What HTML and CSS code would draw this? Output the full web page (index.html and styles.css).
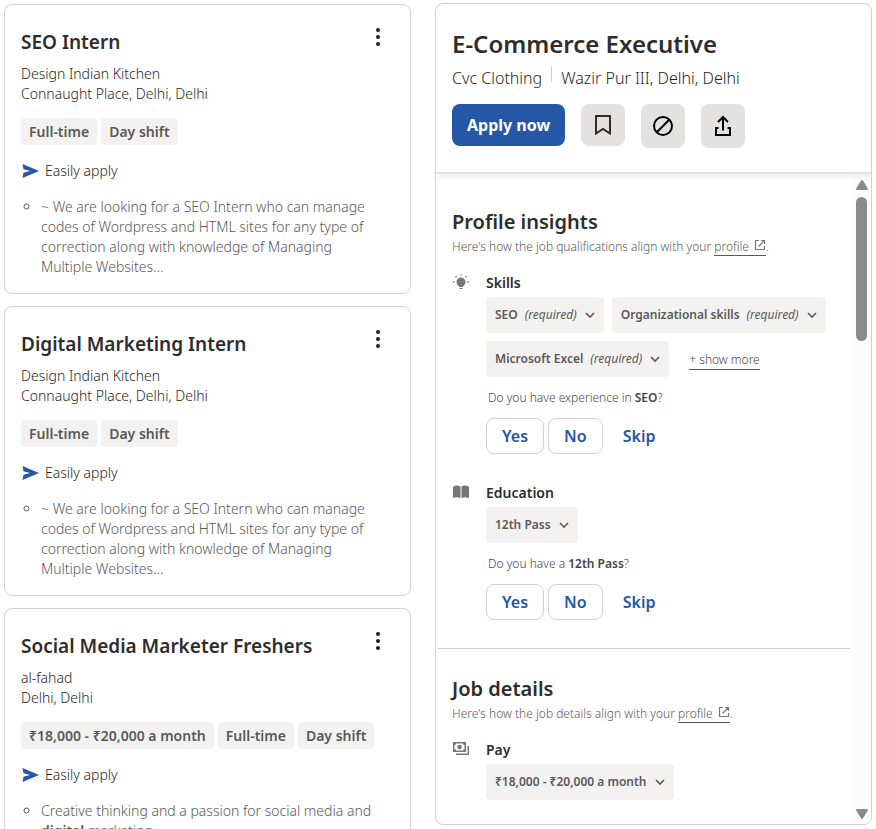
FILE: index.html
```html
<!DOCTYPE html>
<html lang="en">
<head>
<meta charset="utf-8">
<title>Job search</title>
<link rel="stylesheet" href="styles.css">
</head>
<body>
<svg class="sprite" aria-hidden="true">
  <symbol id="dots" viewBox="0 0 20 20"><circle cx="10" cy="3" r="2"/><circle cx="10" cy="10" r="2"/><circle cx="10" cy="17" r="2"/></symbol>
  <symbol id="send" viewBox="0 0 18 16"><path d="M1.500 1L18 8 1.500 15 2.500 9.800 9 8 2.500 6.200z"/></symbol>
  <symbol id="chevron" viewBox="0 0 10 10"><path d="M1 3l4 4 4-4" fill="none" stroke="currentColor" stroke-width="1.600"/></symbol>
  <symbol id="external" viewBox="0 0 12 12"><path d="M5 1.500H1.500v9h9V7M7 1.500h3.500V5M10.500 1.500L4.500 7.500" fill="none" stroke="currentColor" stroke-width="1.200"/></symbol>
</svg>
<main class="page">
  <section class="results" aria-label="Jobs">
    <article class="card">
      <div class="card-head"><h2>SEO Intern</h2><button class="more" aria-label="Job actions"><svg><use href="#dots"/></svg></button></div>
      <p class="company">Design Indian Kitchen<br>Connaught Place, Delhi, Delhi</p>
      <div class="tags"><span>Full-time</span><span>Day shift</span></div>
      <p class="easy"><svg><use href="#send"/></svg>Easily apply</p>
      <ul><li>~ We are looking for a SEO Intern who can manage codes of Wordpress and HTML sites for any type of correction along with knowledge of Managing Multiple Websites…</li></ul>
    </article>
    <article class="card">
      <div class="card-head"><h2>Digital Marketing Intern</h2><button class="more" aria-label="Job actions"><svg><use href="#dots"/></svg></button></div>
      <p class="company">Design Indian Kitchen<br>Connaught Place, Delhi, Delhi</p>
      <div class="tags"><span>Full-time</span><span>Day shift</span></div>
      <p class="easy"><svg><use href="#send"/></svg>Easily apply</p>
      <ul><li>~ We are looking for a SEO Intern who can manage codes of Wordpress and HTML sites for any type of correction along with knowledge of Managing Multiple Websites…</li></ul>
    </article>
    <article class="card">
      <div class="card-head"><h2>Social Media Marketer Freshers</h2><button class="more" aria-label="Job actions"><svg><use href="#dots"/></svg></button></div>
      <p class="company">al-fahad<br>Delhi, Delhi</p>
      <div class="tags"><span>₹18,000 - ₹20,000 a month</span><span>Full-time</span><span>Day shift</span></div>
      <p class="easy"><svg><use href="#send"/></svg>Easily apply</p>
      <ul><li>Creative thinking and a passion for social media and <b>digital</b> marketing.</li></ul>
    </article>
  </section>
  <section class="detail" aria-label="Job">
    <header class="detail-head">
      <h1>E-Commerce Executive</h1>
      <p class="where"><span>Cvc Clothing</span><span class="divider"></span><span>Wazir Pur III, Delhi, Delhi</span></p>
      <div class="actions">
        <button class="apply">Apply now</button>
        <button class="icon-btn save" aria-label="Save job"><svg viewBox="0 0 20 22"><path d="M3 2h14v17.500l-7-4.500-7 4.500z" fill="none" stroke="#2d2d2d" stroke-width="2"/></svg></button>
        <button class="icon-btn" aria-label="Not interested"><svg viewBox="0 0 20 22"><circle cx="10" cy="11" r="9" fill="none" stroke="#000" stroke-width="2"/><path d="M3.800 17.200L16.200 4.800" stroke="#000" stroke-width="2"/></svg></button>
        <button class="icon-btn" aria-label="Share"><svg viewBox="0 0 20 22"><path d="M5.500 13H3v7h14v-7h-2.500M10 15.500V3M5 7l5-5 5 5" fill="none" stroke="#000" stroke-width="2"/></svg></button>
      </div>
    </header>
    <div class="detail-body">
      <div class="content">
        <section class="block">
          <h2>Profile insights</h2>
          <p class="hint">Here's how the job qualifications align with your <a href="#">profile <svg><use href="#external"/></svg></a>.</p>
          <div class="item">
            <svg class="item-icon" viewBox="0 0 16 16"><circle cx="8" cy="8" r="4.500"/><path d="M6 11h4v2H6zM6.500 14h3v1h-3zM7.500 0h1v1.500h-1zM0 7.200h1.700v1.200H0zM14.300 7.200H16v1.200h-1.700zM2 2.800l1-1 1 1-1 1zM12 2.800l1-1 1 1-1 1z"/></svg>
            <div>
              <h3>Skills</h3>
              <div class="chips">
                <button class="chip">SEO <i>(required)</i><svg><use href="#chevron"/></svg></button>
                <button class="chip">Organizational skills <i>(required)</i><svg><use href="#chevron"/></svg></button>
                <button class="chip">Microsoft Excel <i>(required)</i><svg><use href="#chevron"/></svg></button>
                <a class="show-more" href="#">+ show more</a>
              </div>
              <p class="question">Do you have experience in <b>SEO</b>?</p>
              <div class="answers"><button>Yes</button><button>No</button><button class="skip">Skip</button></div>
            </div>
          </div>
          <div class="item">
            <svg class="item-icon" viewBox="0 0 16 16"><path d="M0 3q3.500-2.500 7.500-.5V14q-3.500-1.500-7.500 0zM8.500 2.500Q12.500.5 16 3v11q-4-1.500-7.500 0z"/></svg>
            <div>
              <h3>Education</h3>
              <div class="chips"><button class="chip">12th Pass<svg><use href="#chevron"/></svg></button></div>
              <p class="question">Do you have a <b>12th Pass</b>?</p>
              <div class="answers"><button>Yes</button><button>No</button><button class="skip">Skip</button></div>
            </div>
          </div>
        </section>
        <section class="block">
          <h2>Job details</h2>
          <p class="hint">Here's how the job details align with your <a href="#">profile <svg><use href="#external"/></svg></a>.</p>
          <div class="item">
            <svg class="item-icon" viewBox="0 0 16 16"><path d="M0 1h13v10H0zM3 12.500h11.500V5H16v9H3z"/><path d="M3 2.500h7q0 1.500 1.500 1.500v4Q10 8 10 9.500H3Q3 8 1.500 8V4Q3 4 3 2.500z" fill="#fff"/><circle cx="6.500" cy="6" r="2.300"/></svg>
            <div>
              <h3>Pay</h3>
              <div class="chips"><button class="chip">₹18,000 - ₹20,000 a month<svg><use href="#chevron"/></svg></button></div>
            </div>
          </div>
        </section>
      </div>
      <div class="scrollbar" aria-hidden="true">
        <svg viewBox="0 0 12 10"><path d="M6 1l5 8H1z" stroke-linejoin="round" stroke-width="2"/></svg>
        <div class="thumb"></div>
        <svg class="down" viewBox="0 0 12 10"><path d="M6 9l5-8H1z" stroke-linejoin="round" stroke-width="2"/></svg>
      </div>
    </div>
  </section>
</main>
</body>
</html>
```
FILE: styles.css
```css
* { box-sizing: border-box; }
body { margin: 0; font-family: "Noto Sans", sans-serif; font-size: 14px; font-weight: 350; line-height: 20px; color: #1f1f1f; background: #fff; }
h1, h2, h3, p, ul { margin: 0; padding: 0; }
h1, h2, h3, b { font-weight: 600; }
h1, h2, h3 { color: #2d2d2d; }
button { font: inherit; color: inherit; border: 0; padding: 0; background: none; cursor: pointer; }
svg { fill: currentColor; flex: none; }
.sprite { display: none; }
.page { display: grid; grid-template-columns: 407fr 437fr; grid-template-rows: minmax(0, 1fr); gap: 24px; height: 100vh; padding: 4px; overflow: hidden; }
.results { display: flex; flex-direction: column; gap: 12px; min-width: 0; }
.card { flex: none; border: 1px solid #d4d2d0; border-radius: 8px; padding: 22px 16px 16px; }
.card-head { display: flex; justify-content: space-between; margin-bottom: 7px; }
.card-head h2 { font-size: 19px; line-height: 30px; }
.more { width: 32px; height: 20px; display: flex; justify-content: center; }
.more svg { width: 20px; height: 20px; }
.tags { display: flex; gap: 4px; margin: 14px 0 16px; }
.tags span { padding: 0 8px; line-height: 27px; border-radius: 4px; background: #f3f2f1; color: #595959; font-weight: 600; }
.easy { display: flex; align-items: center; gap: 6px; margin-bottom: 16px; }
.easy svg { width: 18px; height: 16px; color: #2557a7; }
.card ul { list-style: circle; padding: 0 14px 0 20px; color: #595959; }

.detail { display: flex; flex-direction: column; min-width: 0; margin-top: -1px; border: 1px solid #d4d2d0; border-radius: 8px; overflow: hidden; }
.detail-head { padding: 24px 16px; border-bottom: 2px solid #e4e2e0; box-shadow: 0 2px 6px rgba(0, 0, 0, .08); position: relative; }
.detail-head h1 { font-size: 24px; line-height: 32px; }
.where { display: flex; font-size: 16px; line-height: 24px; margin: 6px 0 14px; }
.divider { width: 1px; height: 16px; margin: 0 9px; background: #d4d2d0; }
.actions { display: flex; gap: 16px; }
.apply { height: 42px; padding: 0 15px; border-radius: 8px; background: #2557a7; color: #fff; font-size: 16px; font-weight: 700; }
.icon-btn { width: 44px; height: 44px; border-radius: 8px; background: #e4e2e0; display: grid; place-items: center; }
.icon-btn svg { width: 20px; height: 22px; }
.save { height: 42px; }
.detail-body { flex: 1; display: flex; min-height: 0; }
.content { flex: 1; min-width: 0; padding: 0 2px; overflow: hidden; }
.block { padding: 32px 14px 28px; }
.block + .block { border-top: 1px solid #d4d2d0; padding-top: 24px; }
.block h2 { font-size: 20px; line-height: 32px; }
.hint { font-size: 12px; line-height: 18px; color: #595959; }
.hint a { color: inherit; text-decoration: none; border-bottom: 1px solid #595959; }
.hint svg { width: 12px; height: 12px; margin-left: 2px; color: #767676; }
.item { display: flex; gap: 16px; margin-top: 18px; }
.item + .item { margin-top: 30px; }
.item-icon { width: 18px; height: 16px; color: #767676; }
.item h3 { font-size: 14px; line-height: 18px; margin-bottom: 5px; }
.chips { display: flex; flex-wrap: wrap; gap: 8px; }
.chip { display: flex; align-items: center; height: 36px; padding: 0 9px; border-radius: 4px; background: #f3f2f1; color: #595959; font-size: 12px; font-weight: 600; }
.chip i { font-weight: 400; margin-left: 7px; }
.chip svg { width: 10px; height: 10px; margin-left: 8px; }
.show-more { align-self: flex-end; margin: 0 0 7px 12px; font-size: 12px; line-height: 18px; color: #454545; text-decoration: none; border-bottom: 1px solid #595959; }
.question { margin: 11px 2px 10px; font-size: 12px; color: #454545; }
.answers { display: flex; gap: 4px; }
.answers button { height: 36px; padding: 0 15px; border: 1px solid #d4d2d0; border-radius: 8px; color: #2557a7; font-size: 16px; font-weight: 600; }
.answers .skip { border-color: transparent; }
.scrollbar { width: 19px; padding: 6px 4px 5px; display: flex; flex-direction: column; align-items: center; gap: 7px; background: #fcfcfc; color: #8b8b8b; }
.scrollbar svg { width: 12px; height: 10px; stroke: currentColor; }
.thumb { width: 11px; height: 144px; border-radius: 6px; background: #8b8b8b; }
.scrollbar .down { margin-top: auto; }
```
